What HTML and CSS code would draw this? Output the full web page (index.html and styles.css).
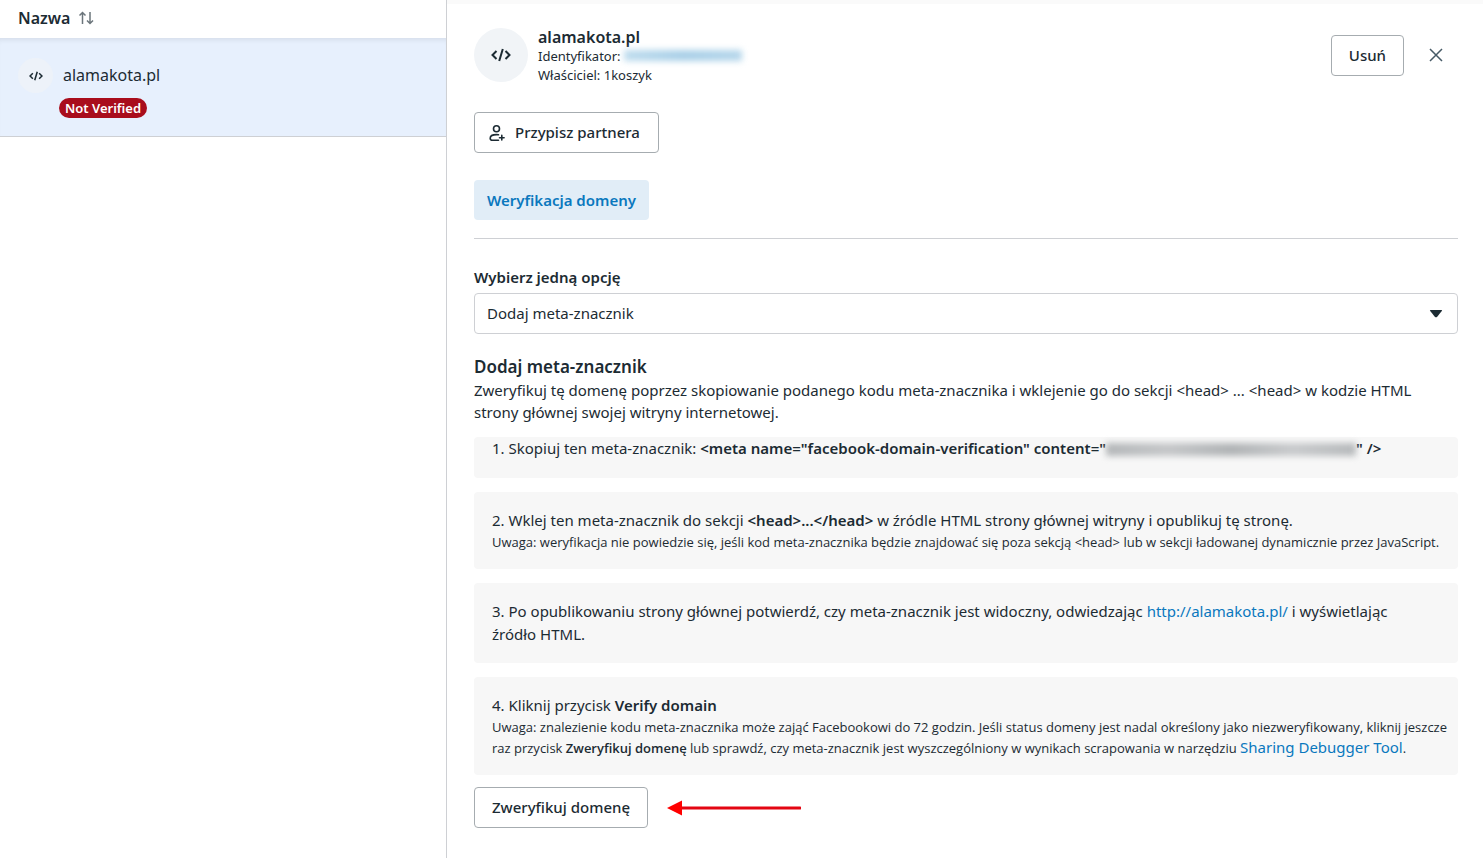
FILE: index.html
```html
<!DOCTYPE html>
<html lang="pl">
<head>
  <meta charset="UTF-8">
  <meta name="viewport" content="width=device-width, initial-scale=1.0">
  <title>Weryfikacja domeny</title>
  <link rel="stylesheet" href="styles.css">
</head>
<body>

  <div class="layout">
    <aside class="sidebar">
      <table class="domains">
        <thead>
          <tr>
            <th>
              <button class="sort" type="button">Nazwa
                <svg width="16" height="14" viewBox="0 0 16 14" fill="none" stroke="#6b757b" stroke-width="1.5">
                  <path d="M4.500 13V1.500M1.500 4.500l3-3 3 3M12 1v11.500M9 9.500l3 3 3-3"/>
                </svg>
              </button>
            </th>
          </tr>
        </thead>
        <tbody>
          <tr>
            <td>
              <div class="domain">
                <span class="avatar small">
                  <svg width="14" height="10" viewBox="0 0 20 14" fill="none" stroke="#1c2b33" stroke-width="2.2">
                    <path d="M5.5 3L1.5 7l4 4M14.5 3l4 4-4 4M11.8 1L8.2 13"/>
                  </svg>
                </span>
                <span class="domain-name">alamakota.pl</span>
              </div>
              <span class="badge">Not Verified</span>
            </td>
          </tr>
        </tbody>
      </table>
    </aside>

    <main class="panel">
      <header class="header">
        <span class="avatar">
          <svg width="20" height="14" viewBox="0 0 20 14" fill="none" stroke="#1c2b33" stroke-width="2">
            <path d="M5.5 3L1.5 7l4 4M14.5 3l4 4-4 4M11.8 1L8.2 13"/>
          </svg>
        </span>
        <div class="info">
          <h1>alamakota.pl</h1>
          <p>Identyfikator: <span class="hidden-id"></span></p>
          <p>Właściciel: 1koszyk</p>
        </div>
        <button class="btn" type="button">Usuń</button>
        <button class="close" type="button" aria-label="Zamknij">
          <svg width="14" height="14" viewBox="0 0 14 14" fill="none" stroke="#465a66" stroke-width="1.5">
            <path d="M1 1l12 12M13 1L1 13"/>
          </svg>
        </button>
      </header>

      <button class="btn partner" type="button">
        <svg width="16" height="18" viewBox="0 0 16 18" fill="none" stroke="#1c2b33" stroke-width="1.6" stroke-linecap="round" stroke-linejoin="round">
          <circle cx="7.500" cy="4.700" r="3"/>
          <path d="M9.500 10.800C8.900 10.700 8.200 10.600 7.500 10.600 4 10.600 1.200 12 1.200 14.200 1.200 15.600 2 16.200 3.300 16.200H9.500M12.800 11.400v4.600M10.500 13.700h4.600"/>
        </svg>
        Przypisz partnera
      </button>

      <nav class="tabs">
        <a class="tab" href="#weryfikacja">Weryfikacja domeny</a>
      </nav>

      <section id="weryfikacja">
        <label class="label" for="method">Wybierz jedną opcję</label>
        <div class="select">
          <select id="method">
            <option>Dodaj meta-znacznik</option>
          </select>
          <svg class="caret" width="14" height="8" viewBox="0 0 14 8" fill="#1c2b33">
            <path d="M1.600 0h10.800q1.200 0 .4 1L8 6.900q-1 .9-2 0L1.200 1Q.4 0 1.600 0z"/>
          </svg>
        </div>

        <h2>Dodaj meta-znacznik</h2>
        <p class="intro">Zweryfikuj tę domenę poprzez skopiowanie podanego kodu meta-znacznika i wklejenie go do sekcji &lt;head&gt; ... &lt;head&gt; w kodzie HTML strony głównej swojej witryny internetowej.</p>

        <div class="steps">
          <div class="step first">
            <p>1. Skopiuj ten meta-znacznik: <b>&lt;meta name="facebook-domain-verification" content="<span class="hidden-code"></span>" /&gt;</b></p>
          </div>
          <div class="step">
            <p>2. Wklej ten meta-znacznik do sekcji <b>&lt;head&gt;...&lt;/head&gt;</b> w źródle HTML strony głównej witryny i opublikuj tę stronę.</p>
            <p class="note">Uwaga: weryfikacja nie powiedzie się, jeśli kod meta-znacznika będzie znajdować się poza sekcją &lt;head&gt; lub w sekcji ładowanej dynamicznie przez JavaScript.</p>
          </div>
          <div class="step">
            <p>3. Po opublikowaniu strony głównej potwierdź, czy meta-znacznik jest widoczny, odwiedzając <a href="http://alamakota.pl/">http://alamakota.pl/</a> i wyświetlając źródło&nbsp;HTML.</p>
          </div>
          <div class="step">
            <p>4. Kliknij przycisk <b>Verify domain</b></p>
            <p class="note">Uwaga: znalezienie kodu meta-znacznika może zająć Facebookowi do 72 godzin. Jeśli status domeny jest nadal określony jako niezweryfikowany, kliknij jeszcze raz przycisk <b>Zweryfikuj domenę</b> lub sprawdź, czy meta-znacznik jest wyszczególniony w wynikach scrapowania w narzędziu <a href="#debugger">Sharing Debugger Tool</a>.</p>
          </div>
        </div>

        <div class="actions">
          <button class="btn" type="button">Zweryfikuj domenę</button>
          <svg width="134" height="16" viewBox="0 0 134 16">
            <path d="M12 8h121" stroke="#e30613" stroke-width="3" stroke-linecap="round"/>
            <path d="M0 8L15 .5v15z" fill="#ff0000"/>
          </svg>
        </div>
      </section>
    </main>
  </div>

</body>
</html>
```

FILE: styles.css
```css
* {
  box-sizing: border-box;
}
body {
  margin: 0;
  font-family: 'Noto Sans', sans-serif;
  font-size: 15px;
  line-height: 23px;
  color: #1c2b33;
  background: #fff;
}
h1, h2, p {
  margin: 0;
}
b {
  font-weight: 600;
}
button, select {
  font: inherit;
  color: inherit;
  cursor: pointer;
}
a {
  color: #0a78be;
  text-decoration: none;
}
.layout {
  display: flex;
  min-height: 100vh;
}

/* domain list */
.sidebar {
  flex: 0 0 447px;
  border-right: 1px solid #ced0d4;
  font-size: 16px;
}
.domains {
  width: 100%;
  border-spacing: 0;
}
.domains th {
  height: 38px;
  padding: 0 18px 2px;
  text-align: left;
}
.sort {
  display: flex;
  align-items: center;
  gap: 8px;
  padding: 0;
  border: 0;
  background: none;
  font-weight: 600;
}
.domains td {
  height: 99px;
  padding: 20px 18px 17px;
  vertical-align: top;
  background: #e7f0fd;
  border-bottom: 1px solid #ced0d4;
  box-shadow: inset 0 5px 5px -3px rgba(0,0,0,0.08);
}
.domain {
  display: flex;
  align-items: center;
  gap: 10px;
}
.avatar {
  display: flex;
  flex: none;
  align-items: center;
  justify-content: center;
  width: 54px;
  height: 54px;
  border-radius: 50%;
  background: #f1f4f7;
}
.avatar.small {
  width: 35px;
  height: 35px;
  background: #edf2f9;
}
.badge {
  display: block;
  width: max-content;
  margin: 5px 0 0 41px;
  padding: 0 6px;
  border-radius: 10px;
  background: #a90d1c;
  color: #fff;
  font-size: 13px;
  font-weight: 600;
  line-height: 20px;
}

/* details */
.panel {
  flex: 1;
  min-width: 0;
  padding: 21px 25px 24px 27px;
  border-top: 4px solid #fafafa;
}
.header {
  display: flex;
  align-items: center;
  gap: 10px;
  margin-bottom: 27px;
}
.info {
  flex: 1;
  padding-top: 2px;
  font-size: 13px;
}
.info p {
  line-height: 19px;
}
h1 {
  font-size: 16px;
  font-weight: 600;
  line-height: 20px;
}
.hidden-id {
  display: inline-block;
  width: 118px;
  height: 11px;
  background: linear-gradient(90deg, #bedcee, #a8cfe7, #b5d6eb);
  filter: blur(3px);
}
.btn {
  height: 41px;
  padding: 0 17px;
  border: 1px solid #a6acb0;
  border-radius: 4px;
  background: #fff;
  font-weight: 500;
}
.close {
  display: flex;
  margin-left: 5px;
  padding: 10px 15px 10px 10px;
  border: 0;
  background: none;
}
.partner {
  display: flex;
  align-items: center;
  gap: 10px;
  padding: 0 18px 0 14px;
}
.tabs {
  display: flex;
  margin: 27px 0;
  padding-bottom: 18px;
  border-bottom: 1px solid #ced0d4;
}
.tab {
  padding: 0 13px;
  border-radius: 4px;
  background: #e1edf7;
  font-weight: 600;
  line-height: 40px;
}
.label {
  display: block;
  margin-bottom: 4px;
  font-weight: 600;
}
.select {
  display: grid;
  align-items: center;
  margin-bottom: 21px;
}
.select select {
  grid-area: 1 / 1;
  width: 100%;
  height: 41px;
  padding: 0 40px 0 12px;
  border: 1px solid #ced0d4;
  border-radius: 4px;
  background: #fff;
  appearance: none;
}
.caret {
  grid-area: 1 / 1;
  justify-self: end;
  margin-right: 15px;
  pointer-events: none;
}
h2 {
  font-size: 17px;
  font-weight: 600;
  line-height: 24px;
}
.intro {
  margin-bottom: 14px;
  line-height: 22px;
}
.steps {
  display: grid;
  gap: 14px;
}
.step {
  padding: 17px 0 17px 18px;
  border-radius: 4px;
  background: #f7f7f7;
}
.step.first {
  padding: 0 0 18px 18px;
}
.hidden-code {
  display: inline-block;
  width: 250px;
  height: 13px;
  vertical-align: middle;
  background: linear-gradient(90deg, #b4b7b9, #c4c6c8, #b0b3b5, #c8cacc, #b6b9bb);
  filter: blur(3px);
}
.step .note {
  font-family: 'Open Sans', sans-serif;
  font-size: 13px;
  line-height: 20px;
}
.note a {
  font-family: 'Noto Sans', sans-serif;
  font-size: 15px;
}
.actions {
  display: flex;
  align-items: center;
  gap: 19px;
  margin-top: 12px;
}
```
